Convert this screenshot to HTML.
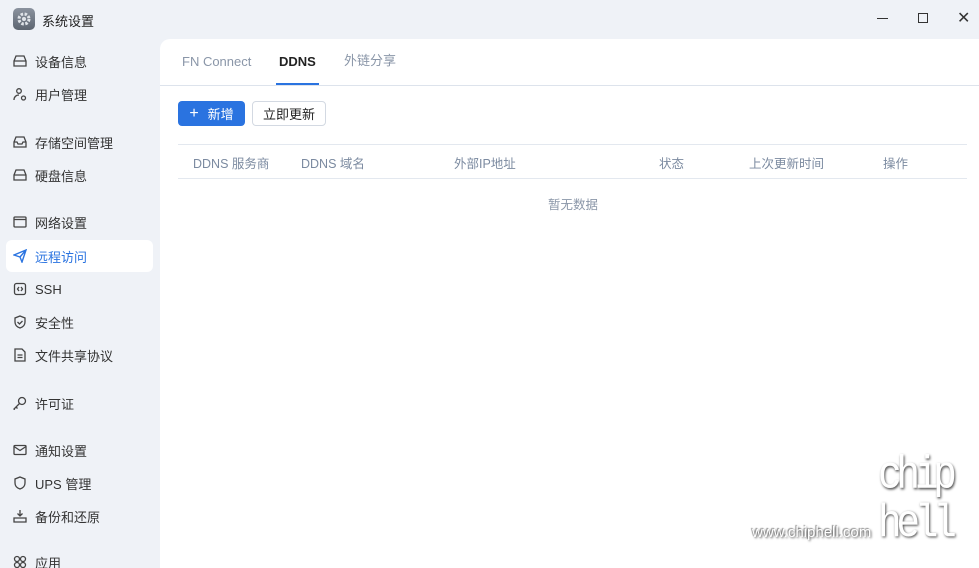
<!DOCTYPE html><html><head><meta charset="utf-8"><style>
*{margin:0;padding:0;box-sizing:border-box}
html,body{width:979px;height:568px;overflow:hidden}
body{background:#eff2f7;font-family:"Liberation Sans","Noto Sans CJK SC",sans-serif;position:relative;color:#333}
.t{position:absolute}
.title{left:42px;top:11px;font-size:13px;color:#222}
.logo{left:13px;top:8px;width:22px;height:22px;border-radius:5px;background:linear-gradient(#8a929e,#5d6570)}
.item{position:absolute;left:6px;width:147px;height:32px;font-size:13px;color:#333;display:flex;align-items:center;padding-left:29px}
.item svg{position:absolute;left:7px;top:9px}
.act{background:#fff;border-radius:6px;color:#2a73e0}
.main{position:absolute;left:160px;top:39px;width:819px;height:529px;background:#fff;border-top-left-radius:10px}
.tab{position:absolute;top:15px;font-size:13px;color:#8a96a8;line-height:16px}
.btn{position:absolute;top:62px;height:25px;border-radius:4px;font-size:13px;display:flex;align-items:center;justify-content:center}
.th{position:absolute;top:114px;font-size:12.5px;color:#7b8aa0}
</style></head><body>
<div class="t logo"><svg width="22" height="22" viewBox="0 0 22 22"><circle cx="11" cy="11" r="5" fill="none" stroke="#dfe3e8" stroke-width="3" stroke-dasharray="2.5 1.5"/><circle cx="11" cy="11" r="2" fill="#dfe3e8"/></svg></div>
<div class="t title">系统设置</div>
<div class="t" style="left:877px;top:18px;width:11px;height:1px;background:#333"></div>
<div class="t" style="left:918px;top:13px;width:10px;height:10px;border:1px solid #333"></div>
<div class="t" style="left:957px;top:8px;font-size:16px;color:#333">✕</div>

<div class="item" style="top:45px"><svg width="14" height="14" fill="none" stroke="#444" stroke-width="1.3"><path d="M1 7l2-5h8l2 5v5H1z M1 7h12"/></svg>设备信息</div>
<div class="item" style="top:78px"><svg width="14" height="14" fill="none" stroke="#444" stroke-width="1.3"><circle cx="6" cy="4" r="2.3"/><path d="M1 13c0-3 2-5 5-5"/><circle cx="10.5" cy="11" r="2"/></svg>用户管理</div>
<div class="item" style="top:126px"><svg width="14" height="14" fill="none" stroke="#444" stroke-width="1.3"><path d="M1 7l2-5h8l2 5v5H1z M1 7h3l1 2h4l1-2h3"/></svg>存储空间管理</div>
<div class="item" style="top:159px"><svg width="14" height="14" fill="none" stroke="#444" stroke-width="1.3"><path d="M1 7l2-5h8l2 5v5H1z M1 7h12"/></svg>硬盘信息</div>
<div class="item" style="top:206px"><svg width="14" height="14" fill="none" stroke="#444" stroke-width="1.3"><rect x="1" y="2" width="12" height="10" rx="1"/><path d="M1 4.5h12"/></svg>网络设置</div>
<div class="item act" style="top:240px"><svg width="14" height="14" fill="none" stroke="#2a73e0" stroke-width="1.4"><path d="M1 6L13 1 9 13 7 8z M7 8l6-7"/></svg>远程访问</div>
<div class="item" style="top:273px"><svg width="14" height="14" fill="none" stroke="#444" stroke-width="1.3"><rect x="1.5" y="1.5" width="11" height="11" rx="2"/><path d="M6 5L4.5 7 6 9M8 5l1.5 2L8 9"/></svg>SSH</div>
<div class="item" style="top:306px"><svg width="14" height="14" fill="none" stroke="#444" stroke-width="1.3"><path d="M7 1l5 2v4c0 3-2 5-5 6-3-1-5-3-5-6V3z M4.5 7l2 2 3-3"/></svg>安全性</div>
<div class="item" style="top:339px"><svg width="14" height="14" fill="none" stroke="#444" stroke-width="1.3"><path d="M2 1h7l3 3v9H2z M4.5 7h5M4.5 9.5h5"/></svg>文件共享协议</div>
<div class="item" style="top:387px"><svg width="14" height="14" fill="none" stroke="#444" stroke-width="1.3"><circle cx="9" cy="5" r="3.5"/><path d="M6.5 7.5L1 13l1 .5M3 11l1.5 1.5"/></svg>许可证</div>
<div class="item" style="top:434px"><svg width="14" height="14" fill="none" stroke="#444" stroke-width="1.3"><rect x="1" y="2.5" width="12" height="9" rx="1"/><path d="M1 3.5l6 4 6-4"/></svg>通知设置</div>
<div class="item" style="top:467px"><svg width="14" height="14" fill="none" stroke="#444" stroke-width="1.3"><path d="M7 1l5 2v4c0 3-2 5-5 6-3-1-5-3-5-6V3z"/></svg>UPS 管理</div>
<div class="item" style="top:500px"><svg width="14" height="14" fill="none" stroke="#444" stroke-width="1.3"><path d="M7 1v6M4.5 4.5L7 7l2.5-2.5M1 9h12v4H1z"/></svg>备份和还原</div>
<div class="item" style="top:546px"><svg width="14" height="14" fill="none" stroke="#444" stroke-width="1.3"><circle cx="4" cy="4" r="2.5"/><circle cx="10" cy="4" r="2.5"/><circle cx="4" cy="10" r="2.5"/><circle cx="10" cy="10" r="2.5"/></svg>应用</div>

<div class="main">
<div class="tab" style="left:22px">FN Connect</div>
<div class="tab" style="left:119px;color:#222;font-weight:bold">DDNS</div>
<div class="t" style="left:116px;top:44px;width:43px;height:2px;background:#2a73e0"></div>
<div class="tab" style="left:184px;top:14px">外链分享</div>
<div class="t" style="left:0;top:46px;width:819px;height:1px;background:#dde3ec"></div>
<div class="btn" style="left:18px;width:67px;background:#2a73e0;color:#fff"><span style="font-size:16px;margin-right:9px">+</span>新增</div>
<div class="btn" style="left:92px;width:74px;border:1px solid #d3d9e2;color:#222">立即更新</div>
<div class="t" style="left:18px;top:105px;width:789px;height:1px;background:#e3e8ef"></div>
<div class="th" style="left:33px">DDNS 服务商</div>
<div class="th" style="left:141px">DDNS 域名</div>
<div class="th" style="left:294px">外部IP地址</div>
<div class="th" style="left:499px">状态</div>
<div class="th" style="left:589px">上次更新时间</div>
<div class="th" style="left:723px">操作</div>
<div class="t" style="left:18px;top:139px;width:789px;height:1px;background:#e3e8ef"></div>
<div class="t" style="left:388px;top:155px;font-size:12.5px;color:#8a96a8">暂无数据</div>
</div>
<div class="t" style="left:752px;top:524px;font-size:15px;color:#fff;text-shadow:1px 1px 2px #555,-1px -1px 1px #888">www.chiphell.com</div>
<div class="t" style="left:878px;top:452px;font-size:44px;line-height:46px;color:#fff;font-family:'Liberation Mono',monospace;text-shadow:1px 1px 3px #444;letter-spacing:-6px;transform-origin:0 0;transform:scale(0.9,1.05)">chip<br>hell</div>
</body></html>
